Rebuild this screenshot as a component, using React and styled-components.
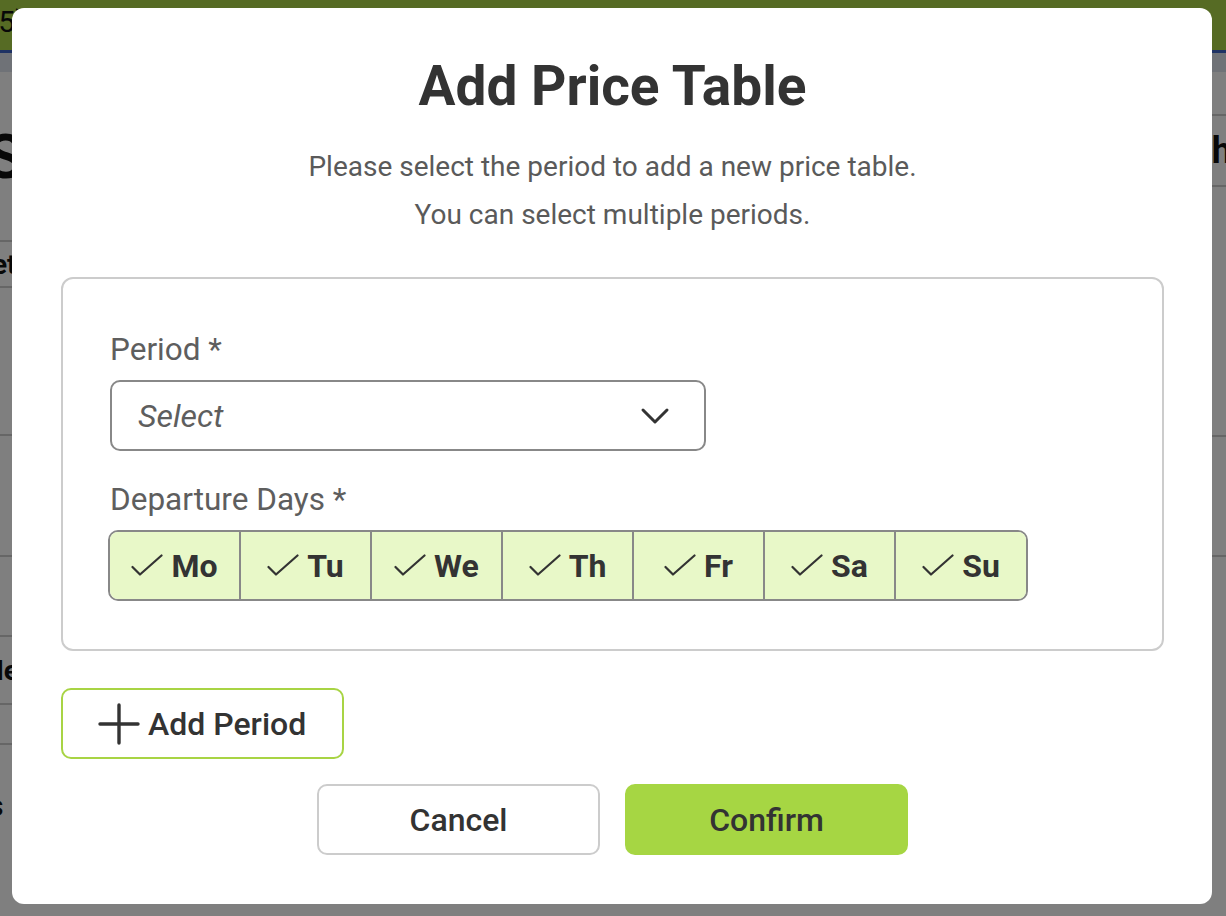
import React, { useState } from "react";
import styled, { createGlobalStyle } from "styled-components";

const GlobalStyle = createGlobalStyle`
  * { box-sizing: border-box; }
  html, body {
    margin: 0;
    padding: 0;
    font-family: Roboto, "Liberation Sans", Arial, sans-serif;
    background: #ffffff;
    overflow: hidden;
  }
`;

/* ---------- page behind the dialog ---------- */

const Page = styled.div`
  width: 1226px;
  height: 916px;
  background: #ffffff;
  overflow: hidden;
`;

const Header = styled.header`
  height: 50px;
  background: #acd648;
  color: #111;
  font-size: 30px;
  line-height: 44px;
  span { margin-left: -12px; }
`;

const BlueLine = styled.div`
  height: 3px;
  background: #3c64c8;
`;

const TabStrip = styled.div`
  height: 19px;
  background: #dfe4ee;
`;

const Content = styled.div`
  display: flex;
  justify-content: space-between;
`;

const SideColumn = styled.div`
  width: 120px;
  display: flex;
  flex-direction: column;
`;

const Row = styled.div`
  height: ${(p) => p.$h}px;
  width: 100%;
  border-bottom: ${(p) => (p.$line ? "2px solid #cccccc" : "none")};
  display: flex;
  align-items: center;
  justify-content: ${(p) => (p.$right ? "flex-end" : "flex-start")};
  font-size: ${(p) => p.$size || 30}px;
  font-weight: 700;
  color: #111;
  overflow: hidden;
  white-space: nowrap;
`;

const Clip = styled.span`
  margin-left: ${(p) => p.$offset || 0}px;
  margin-right: ${(p) => p.$end || 0}px;
`;

/* ---------- dialog ---------- */

const Overlay = styled.div`
  position: fixed;
  inset: 0;
  background: rgba(0, 0, 0, 0.5);
  display: flex;
  justify-content: flex-start;
  align-items: flex-start;
  padding: 8px 0 0 12px;
`;

const Dialog = styled.div`
  width: 1200px;
  height: 896px;
  background: #ffffff;
  border-radius: 12px;
  padding: 50px 48px 49px 49px;
  display: flex;
  flex-direction: column;
`;

const Title = styled.h1`
  margin: 0;
  text-align: center;
  font-size: 55px;
  line-height: 56px;
  font-weight: 700;
  color: #333333;
`;

const Subtitle = styled.p`
  margin: 29px 0 0;
  text-align: center;
  font-size: 28px;
  line-height: 48px;
  color: #5a5a5a;
`;

const Card = styled.section`
  margin-top: 38px;
  border: 2px solid #cccccc;
  border-radius: 12px;
  padding: 53px 47px 48px;
  display: flex;
  flex-direction: column;
  align-items: flex-start;
`;

const Label = styled.label`
  font-size: 31.5px;
  line-height: 36px;
  color: #5e5e5e;
  margin-top: ${(p) => p.$top || 0}px;
`;

const SelectBox = styled.button`
  margin-top: 12px;
  width: 596px;
  height: 71px;
  border: 2px solid #888888;
  border-radius: 10px;
  background: #ffffff;
  padding: 0 34px 0 26px;
  display: flex;
  align-items: center;
  justify-content: space-between;
  font-family: inherit;
  font-size: 32px;
  font-style: italic;
  color: #5e5e5e;
  cursor: pointer;
`;

const DayGroup = styled.div`
  margin-top: 12px;
  margin-left: -2px;
  display: flex;
  border: 2px solid #888888;
  border-radius: 10px;
  overflow: hidden;
`;

const DayCell = styled.button`
  width: ${(p) => (p.$last ? 130 : 131)}px;
  height: 67px;
  border: none;
  border-right: ${(p) => (p.$last ? "none" : "2px solid #888888")};
  background: ${(p) => (p.$on ? "#e8f8c8" : "#ffffff")};
  display: flex;
  align-items: center;
  justify-content: center;
  gap: 8px;
  font-family: inherit;
  font-size: 32px;
  font-weight: 700;
  color: #333333;
  cursor: pointer;
  padding: 0;
`;

const AddButton = styled.button`
  margin-top: 37px;
  align-self: flex-start;
  width: 283px;
  height: 71px;
  border: 2px solid #a8d444;
  border-radius: 10px;
  background: #ffffff;
  display: flex;
  align-items: center;
  gap: 8px;
  padding: 0 0 0 35px;
  font-family: inherit;
  font-size: 32px;
  font-weight: 500;
  color: #333333;
  cursor: pointer;
`;

const Actions = styled.div`
  margin-top: 25px;
  display: flex;
  justify-content: center;
  gap: 25px;
`;

const ActionButton = styled.button`
  width: 283px;
  height: 71px;
  border-radius: 10px;
  border: 2px solid ${(p) => (p.$primary ? "#a6d643" : "#cccccc")};
  background: ${(p) => (p.$primary ? "#a6d643" : "#ffffff")};
  font-family: inherit;
  font-size: 32px;
  font-weight: 500;
  color: #333333;
  cursor: pointer;
`;

const Chevron = () => (
  <svg width="30" height="18" viewBox="0 0 30 18" fill="none">
    <path d="M3 3 L15 15 L27 3" stroke="#333" strokeWidth="3" strokeLinecap="round" strokeLinejoin="round" />
  </svg>
);

const Check = () => (
  <svg width="32" height="24" viewBox="0 0 32 24" fill="none">
    <path d="M1.5 13 L9 20.5 L30.5 1.5" stroke="#333" strokeWidth="2.2" strokeLinecap="round" strokeLinejoin="round" />
  </svg>
);

const Plus = () => (
  <svg width="42" height="42" viewBox="0 0 42 42" fill="none">
    <path d="M21 2 V40 M2 21 H40" stroke="#333" strokeWidth="3.4" strokeLinecap="round" />
  </svg>
);

const days = ["Mo", "Tu", "We", "Th", "Fr", "Sa", "Su"];

export default function App() {
  const [selected, setSelected] = useState(days);

  const toggle = (d) =>
    setSelected((s) => (s.includes(d) ? s.filter((x) => x !== d) : [...s, d]));

  return (
    <>
      <GlobalStyle />
      <Page>
        <Header>
          <span>(5)</span>
        </Header>
        <BlueLine />
        <TabStrip />
        <Content>
          <SideColumn>
            <Row $h={170} $line $size={62}><Clip $offset={-14}>Se</Clip></Row>
            <Row $h={46} $line $size={28}><Clip $offset={-8}>et</Clip></Row>
            <Row $h={148} $line />
            <Row $h={121} $line />
            <Row $h={80} $line />
            <Row $h={68} $line $size={28}><Clip $offset={-16}>Ne</Clip></Row>
            <Row $h={40} $line />
            <Row $h={120} $size={30}><Clip $offset={-20}>ls</Clip></Row>
          </SideColumn>
          <SideColumn>
            <Row $h={44} $line $right />
            <Row $h={71} $line $right $size={36}><Clip $end={-6}>Month</Clip></Row>
            <Row $h={250} $line $right />
            <Row $h={120} $line $right />
          </SideColumn>
        </Content>
      </Page>

      <Overlay>
        <Dialog>
          <Title>Add Price Table</Title>
          <Subtitle>
            Please select the period to add a new price table.
            <br />
            You can select multiple periods.
          </Subtitle>

          <Card>
            <Label>Period *</Label>
            <SelectBox type="button">
              <span>Select</span>
              <Chevron />
            </SelectBox>

            <Label $top={31}>Departure Days *</Label>
            <DayGroup>
              {days.map((d, i) => (
                <DayCell
                  key={d}
                  type="button"
                  $on={selected.includes(d)}
                  $last={i === days.length - 1}
                  onClick={() => toggle(d)}
                >
                  {selected.includes(d) && <Check />}
                  {d}
                </DayCell>
              ))}
            </DayGroup>
          </Card>

          <AddButton type="button">
            <Plus />
            Add Period
          </AddButton>

          <Actions>
            <ActionButton type="button">Cancel</ActionButton>
            <ActionButton type="button" $primary>Confirm</ActionButton>
          </Actions>
        </Dialog>
      </Overlay>
    </>
  );
}
